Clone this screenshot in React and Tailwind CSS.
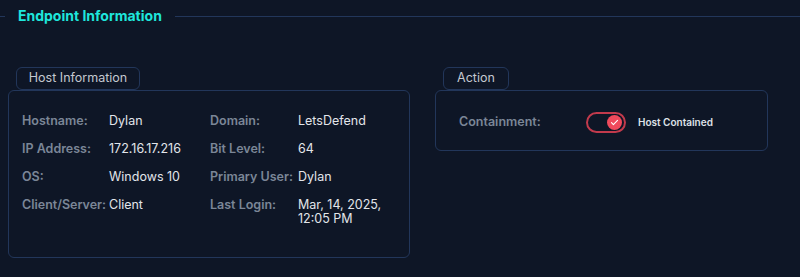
import React from "react";

const hostRows = [
    ["Hostname:", "Dylan", "Domain:", "LetsDefend"],
    ["IP Address:", "172.16.17.216", "Bit Level:", "64"],
    ["OS:", "Windows 10", "Primary User:", "Dylan"],
    ["Client/Server:", "Client", "Last Login:", "Mar, 14, 2025,\n12:05 PM"],
];

const App = () => {
    return (
        <div
            className="min-h-[277px] w-full bg-[#0e1626] text-[#e2e5ea]"
            style={{ fontFamily: "Inter, 'Noto Sans', sans-serif" }}
        >
            {/* Header */}
            <div className="flex items-center pt-[6px] h-[26px]">
                <div className="w-[5px] h-px bg-[#22365a]" />
                <h1 className="px-[13px] text-[14px] font-bold text-[#1ee6dc] leading-none">
                    Endpoint Information
                </h1>
                <div className="flex-1 h-px bg-[#22365a]" />
            </div>

            <div className="flex items-start gap-[25px] pt-[41px]">
                {/* Host Information */}
                <div className="ml-[8px] w-[402px]">
                    <div className="ml-[8px] w-[124px] h-[23px] flex items-center justify-center rounded-[6px] border border-[#22365a] text-[12.5px] text-[#c4c8d0]">
                        Host Information
                    </div>
                    <div className="h-[168px] rounded-[6px] border border-[#22365a] px-[13px] pt-[22px]">
                        <div className="flex flex-col gap-[12px]">
                            {hostRows.map(([l1, v1, l2, v2]) => (
                                <div key={l1} className="flex text-[12.5px] leading-[16px]">
                                    <span className="w-[87px] font-semibold text-[#7b8697]">{l1}</span>
                                    <span className="w-[101px]">{v1}</span>
                                    <span className="w-[88px] font-semibold text-[#7b8697]">{l2}</span>
                                    <span className="whitespace-pre-line leading-[14px] pt-px">{v2}</span>
                                </div>
                            ))}
                        </div>
                    </div>
                </div>

                {/* Action */}
                <div className="w-[333px]">
                    <div className="ml-[8px] w-[66px] h-[23px] flex items-center justify-center rounded-[6px] border border-[#22365a] text-[12.5px] text-[#c4c8d0]">
                        Action
                    </div>
                    <div className="h-[61px] rounded-[6px] border border-[#22365a] flex items-center pl-[23px] pt-[3px]">
                        <span className="w-[127px] text-[12.5px] font-semibold text-[#7b8697]">Containment:</span>
                        <button
                            type="button"
                            className="relative w-[40px] h-[21px] rounded-full border-2 border-[#c23a4c] bg-[#0e1626]"
                        >
                            <span className="absolute right-[2px] top-[1px] w-[15px] h-[15px] rounded-full bg-[#ef4a5c] flex items-center justify-center">
                                <svg width="9" height="9" viewBox="0 0 24 24" fill="none" stroke="white" strokeWidth="3" strokeLinecap="round" strokeLinejoin="round">
                                    <path d="M4 12.5l5 5L20 6.5" />
                                </svg>
                            </span>
                        </button>
                        <span className="ml-[12px] text-[10px] font-semibold text-[#dfe2e8]">Host Contained</span>
                    </div>
                </div>
            </div>
        </div>
    );
};

export default App;
